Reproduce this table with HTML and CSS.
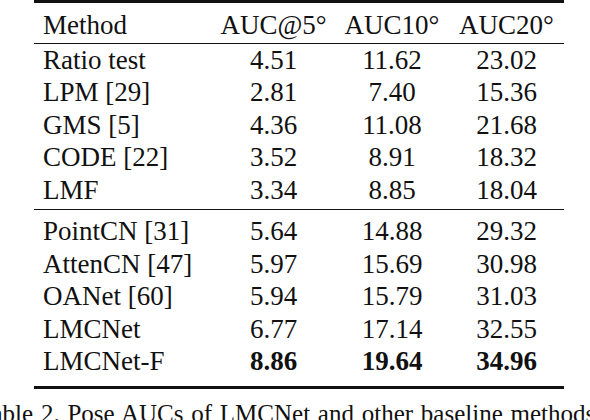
FILE: index.html
```html
<!DOCTYPE html>
<html lang="en">
<head>
    <meta charset="UTF-8">
    <meta name="viewport" content="width=device-width, initial-scale=1.0">
    <title>Table 2</title>
    <link rel="stylesheet" href="styles.css">
</head>
<body>
    <div class="figure">
        <table class="results">
            <thead>
                <tr>
                    <th class="method">Method</th>
                    <th>AUC@5°</th>
                    <th>AUC10°</th>
                    <th>AUC20°</th>
                </tr>
            </thead>
            <tbody>
                <tr><td class="method">Ratio test</td><td>4.51</td><td>11.62</td><td>23.02</td></tr>
                <tr><td class="method">LPM [29]</td><td>2.81</td><td>7.40</td><td>15.36</td></tr>
                <tr><td class="method">GMS [5]</td><td>4.36</td><td>11.08</td><td>21.68</td></tr>
                <tr><td class="method">CODE [22]</td><td>3.52</td><td>8.91</td><td>18.32</td></tr>
                <tr class="group-end"><td class="method">LMF</td><td>3.34</td><td>8.85</td><td>18.04</td></tr>
            </tbody>
            <tbody class="learned">
                <tr class="group-start"><td class="method">PointCN [31]</td><td>5.64</td><td>14.88</td><td>29.32</td></tr>
                <tr><td class="method">AttenCN [47]</td><td>5.97</td><td>15.69</td><td>30.98</td></tr>
                <tr><td class="method">OANet [60]</td><td>5.94</td><td>15.79</td><td>31.03</td></tr>
                <tr><td class="method">LMCNet</td><td>6.77</td><td>17.14</td><td>32.55</td></tr>
                <tr class="group-end"><td class="method">LMCNet-F</td><td class="best">8.86</td><td class="best">19.64</td><td class="best">34.96</td></tr>
            </tbody>
        </table>
        <p class="caption">Table 2. Pose AUCs of LMCNet and other baseline methods</p>
    </div>
</body>
</html>
```

FILE: styles.css
```css
body {
    margin: 0;
    background-color: #fff;
    color: #111;
    font-family: 'Liberation Serif', 'Times New Roman', serif;
    overflow: hidden;
}
.figure {
    width: 590px;
    height: 420px;
    overflow: hidden;
}
.results {
    margin-left: 34px;
    width: 521px;
    border-collapse: collapse;
    border-top: 3px solid #111;
    border-bottom: 3px solid #111;
    font-size: 27px;
    line-height: 32.5px;
    table-layout: fixed;
}
.results th,
.results td {
    padding: 0;
    text-align: center;
    font-weight: normal;
    white-space: nowrap;
}
.results th:nth-child(1) { width: 169px; }
.results th:nth-child(2) { width: 123px; }
.results th:nth-child(3) { width: 114px; }
.results th:nth-child(4) { width: 115px; }
.results .method {
    text-align: left;
    padding-left: 9px;
}
.results thead tr {
    border-bottom: 1px solid #111;
}
.results thead th {
    padding-top: 6px;
    padding-bottom: 1px;
}
.results .learned {
    border-top: 1px solid #111;
}
.results .group-end td {
    padding-bottom: 3px;
}
.results .group-start td {
    padding-top: 5px;
}
.results tbody:last-child .group-end td {
    padding-bottom: 8px;
}
.results .best {
    font-weight: bold;
}
.caption {
    margin: 10px 0 0 -22px;
    font-size: 25px;
    line-height: 30px;
    white-space: nowrap;
    word-spacing: 1.5px;
}
```
